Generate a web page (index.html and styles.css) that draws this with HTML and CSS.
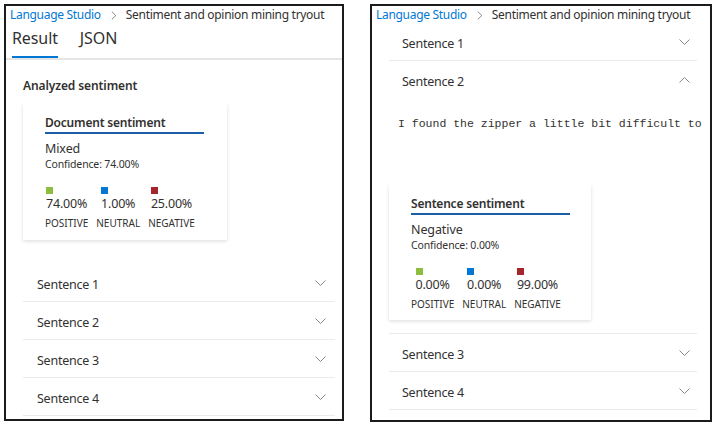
FILE: index.html
```html
<!DOCTYPE html>
<html lang="en">
<head>
<meta charset="utf-8">
<title>Sentiment and opinion mining tryout</title>
<link rel="stylesheet" href="styles.css">
</head>
<body>
<div class="wrap">
  <section class="panel panel-left">
    <nav class="crumb">
      <span class="crumb-link">Language Studio</span>
      <svg class="crumb-sep" width="6" height="9" viewBox="0 0 6 9"><path d="M0.8 0.6 L4.8 4.5 L0.8 8.4" fill="none" stroke="#8a8886" stroke-width="1"/></svg>
      <span class="crumb-current">Sentiment and opinion mining tryout</span>
    </nav>
    <div class="tabs">
      <div class="tab tab-active">Result</div>
      <div class="tab">JSON</div>
    </div>
    <div class="content">
      <h3 class="section-title">Analyzed sentiment</h3>
      <div class="card">
        <div class="card-title">Document sentiment</div>
        <div class="sent-label">Mixed</div>
        <div class="confidence">Confidence: 74.00%</div>
        <div class="scores">
          <div class="score">
            <div class="score-top"><span class="sq sq-pos"></span><span class="val">74.00%</span></div>
            <span class="lbl">POSITIVE</span>
          </div>
          <div class="score">
            <div class="score-top"><span class="sq sq-neu"></span><span class="val">1.00%</span></div>
            <span class="lbl">NEUTRAL</span>
          </div>
          <div class="score">
            <div class="score-top"><span class="sq sq-neg"></span><span class="val">25.00%</span></div>
            <span class="lbl">NEGATIVE</span>
          </div>
        </div>
      </div>
      <div class="acc acc-left">
        <div class="row"><span class="row-text">Sentence 1</span><svg class="chev" width="11" height="6" viewBox="0 0 11 6"><path d="M0.5 0.5 L5.5 5.5 L10.5 0.5" fill="none" stroke="#8a8886" stroke-width="1"/></svg></div>
        <div class="row"><span class="row-text">Sentence 2</span><svg class="chev" width="11" height="6" viewBox="0 0 11 6"><path d="M0.5 0.5 L5.5 5.5 L10.5 0.5" fill="none" stroke="#8a8886" stroke-width="1"/></svg></div>
        <div class="row"><span class="row-text">Sentence 3</span><svg class="chev" width="11" height="6" viewBox="0 0 11 6"><path d="M0.5 0.5 L5.5 5.5 L10.5 0.5" fill="none" stroke="#8a8886" stroke-width="1"/></svg></div>
        <div class="row"><span class="row-text">Sentence 4</span><svg class="chev" width="11" height="6" viewBox="0 0 11 6"><path d="M0.5 0.5 L5.5 5.5 L10.5 0.5" fill="none" stroke="#8a8886" stroke-width="1"/></svg></div>
      </div>
    </div>
  </section>

  <section class="panel panel-right">
    <nav class="crumb">
      <span class="crumb-link">Language Studio</span>
      <svg class="crumb-sep" width="6" height="9" viewBox="0 0 6 9"><path d="M0.8 0.6 L4.8 4.5 L0.8 8.4" fill="none" stroke="#8a8886" stroke-width="1"/></svg>
      <span class="crumb-current">Sentiment and opinion mining tryout</span>
    </nav>
    <div class="acc acc-right">
      <div class="row"><span class="row-text">Sentence 1</span><svg class="chev" width="11" height="6" viewBox="0 0 11 6"><path d="M0.5 0.5 L5.5 5.5 L10.5 0.5" fill="none" stroke="#8a8886" stroke-width="1"/></svg></div>
      <div class="item-open">
        <div class="row row-open"><span class="row-text">Sentence 2</span><svg class="chev" width="11" height="6" viewBox="0 0 11 6"><path d="M0.5 5.5 L5.5 0.5 L10.5 5.5" fill="none" stroke="#8a8886" stroke-width="1"/></svg></div>
        <div class="open-body">
          <pre class="mono">I found the zipper a little bit difficult to</pre>
          <div class="card card-sentence">
            <div class="card-title">Sentence sentiment</div>
            <div class="sent-label">Negative</div>
            <div class="confidence">Confidence: 0.00%</div>
            <div class="scores">
              <div class="score">
                <div class="score-top"><span class="sq sq-pos"></span><span class="val">0.00%</span></div>
                <span class="lbl">POSITIVE</span>
              </div>
              <div class="score">
                <div class="score-top"><span class="sq sq-neu"></span><span class="val">0.00%</span></div>
                <span class="lbl">NEUTRAL</span>
              </div>
              <div class="score">
                <div class="score-top"><span class="sq sq-neg"></span><span class="val">99.00%</span></div>
                <span class="lbl">NEGATIVE</span>
              </div>
            </div>
          </div>
        </div>
      </div>
      <div class="row"><span class="row-text">Sentence 3</span><svg class="chev" width="11" height="6" viewBox="0 0 11 6"><path d="M0.5 0.5 L5.5 5.5 L10.5 0.5" fill="none" stroke="#8a8886" stroke-width="1"/></svg></div>
      <div class="row"><span class="row-text">Sentence 4</span><svg class="chev" width="11" height="6" viewBox="0 0 11 6"><path d="M0.5 0.5 L5.5 5.5 L10.5 0.5" fill="none" stroke="#8a8886" stroke-width="1"/></svg></div>
    </div>
  </section>
</div>
</body>
</html>
```

FILE: styles.css
```css
* { box-sizing: border-box; }
html, body { margin: 0; padding: 0; background: #ffffff; }
body {
  font-family: "Noto Sans", "Open Sans", "Liberation Sans", sans-serif;
  color: #323130;
  width: 716px;
  height: 426px;
  overflow: hidden;
}
.wrap {
  display: flex;
  align-items: flex-start;
  gap: 26px;
  padding: 4px 0 0 4px;
}
.panel {
  border: 2px solid #1b1b1b;
  background: #fff;
  overflow: hidden;
  display: flex;
  flex-direction: column;
}
.panel-left { width: 340px; height: 417px; }
.panel-right { width: 342px; height: 418px; }

.crumb {
  display: flex;
  align-items: center;
  padding: 0 4px;
  height: 18px;
  font-size: 12px;
  letter-spacing: -0.3px;
  line-height: 18px;
  white-space: nowrap;
  flex: none;
}
.panel-right .crumb { height: 17px; }
.crumb-link { color: #0078d4; }
.crumb-sep { margin: 1px 9px 0 10px; flex: none; }
.crumb-current { color: #323130; }

.tabs {
  display: flex;
  gap: 22px;
  padding-left: 6px;
  margin-bottom: 3px;
  border-bottom: 2px solid #e5e5e5;
}
.tab {
  font-size: 16px;
  letter-spacing: -0.1px;
  line-height: 22px;
  padding-top: 3px;
  padding-bottom: 7px;
  border-bottom: 2px solid transparent;
  color: #323130;
}
.tab-active {
  border-bottom-color: #0078d4;
}

.content {
  padding: 0 7px 0 17px;
}
.section-title {
  margin: 14px 0 0 0;
  font-size: 12px;
  letter-spacing: -0.1px;
  line-height: 18px;
  font-weight: 600;
  color: #323130;
}

.card {
  width: 204px;
  margin-top: 8px;
  padding: 11px 0 10px 22px;
  background: #fff;
  box-shadow: 0 1.6px 3.6px rgba(0,0,0,0.13), 0 0.3px 0.9px rgba(0,0,0,0.11);
}
.card-title {
  width: 159px;
  font-size: 12px;
  letter-spacing: -0.2px;
  line-height: 18px;
  font-weight: 600;
  border-bottom: 2px solid #1a5ea8;
}
.sent-label {
  margin-top: 6px;
  font-size: 12.5px;
  letter-spacing: -0.1px;
  line-height: 17px;
}
.confidence {
  font-size: 10.5px;
  letter-spacing: -0.15px;
  line-height: 14px;
}
.scores {
  display: flex;
  gap: 8px;
  margin-top: 16px;
}
.score {
  display: flex;
  flex-direction: column;
  align-items: center;
}
.score-top {
  display: flex;
  flex-direction: column;
  align-items: flex-start;
}
.sq {
  width: 7px;
  height: 7px;
  display: block;
}
.sq-pos { background: #8cbd3e; }
.sq-neu { background: #0078d4; }
.sq-neg { background: #a4262c; }
.val {
  font-size: 12.5px;
  letter-spacing: -0.2px;
  line-height: 17px;
  margin-top: 1px;
}
.lbl {
  font-size: 10px;
  line-height: 14px;
  margin-top: 4px;
  color: #323130;
}

.acc-left { margin-top: 24px; }
.row {
  display: flex;
  align-items: center;
  justify-content: space-between;
  height: 38px;
  border-bottom: 1px solid #edebe9;
  padding: 0 9px 0 14px;
  font-size: 12.5px;
  letter-spacing: -0.25px;
  color: #323130;
}
.row-text { padding-top: 3px; }
.chev { flex: none; }

.acc-right {
  margin: 0 13px 0 17px;
}
.acc-right .row { padding: 0 7px 0 13px; }
.acc-right .row-open { border-bottom: none; }
.item-open {
  border-bottom: 1px solid #edebe9;
}
.open-body {
  padding: 0 0 13px 0;
}
.mono {
  margin: 17px 0 0 0;
  padding-left: 9px;
  font-family: "Liberation Mono", "DejaVu Sans Mono", monospace;
  font-size: 11.5px;
  line-height: 16px;
  color: #323130;
  white-space: pre;
}
.card-sentence {
  width: 202px;
  margin-top: 52px;
  padding-top: 11px;
  padding-bottom: 9px;
}
```
